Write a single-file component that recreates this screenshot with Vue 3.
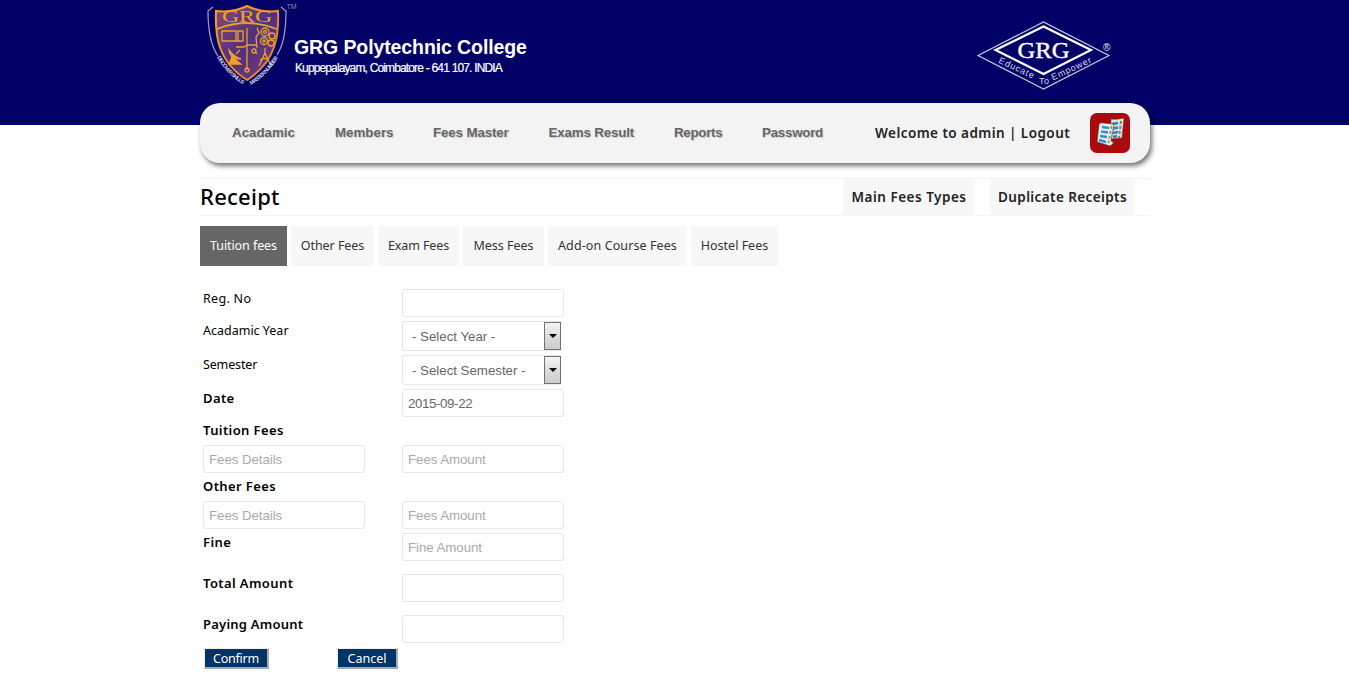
<script setup>
const menu = [
  { label: 'Acadamic', cls: 'm1' },
  { label: 'Members', cls: 'm2' },
  { label: 'Fees Master', cls: 'm3' },
  { label: 'Exams Result', cls: 'm4' },
  { label: 'Reports', cls: 'm5' },
  { label: 'Password', cls: 'm6' },
]
const tabs = [
  { label: 'Tuition fees', cls: 't1 active' },
  { label: 'Other Fees', cls: 't2' },
  { label: 'Exam Fees', cls: 't3' },
  { label: 'Mess Fees', cls: 't4' },
  { label: 'Add-on Course Fees', cls: 't5' },
  { label: 'Hostel Fees', cls: 't6' },
]
</script>

<template>
  <div class="page">
    <header class="banner">
      <div class="brand">
        <svg class="crest" width="94" height="90" viewBox="0 0 94 90">
          <defs>
            <linearGradient id="gold" x1="0" y1="0" x2="1" y2="1">
              <stop offset="0" stop-color="#f6a51b" />
              <stop offset="1" stop-color="#d97f2c" />
            </linearGradient>
            <linearGradient id="plum" x1="0" y1="0" x2="1" y2="1">
              <stop offset="0" stop-color="#8a4a72" />
              <stop offset=".5" stop-color="#503080" />
              <stop offset="1" stop-color="#783d78" />
            </linearGradient>
            <path id="mottoL" d="M17 57Q26 74 44 85" />
            <path id="mottoR" d="M51 85Q68 75 79 56" />
          </defs>
          <path d="M47 6Q33 13 16 11C15 34 17 61 47 80C77 61 79 34 78 11Q61 13 47 6Z" fill="url(#plum)" stroke="url(#gold)" stroke-width="2" />
          <path d="M17 29Q47 17 77 29" fill="none" stroke="#efa126" stroke-width="1.800" />
          <path d="M13 7L8 11C8 32 11 46 18 56M81 7L86 11C86 32 83 46 77 55" fill="none" stroke="#a193bd" stroke-width="1.300" />
          <text x="22" y="22" textLength="50" lengthAdjust="spacingAndGlyphs" font-family="Liberation Serif, serif" font-size="16" fill="#f4a51c">GRG</text>
          <g fill="none" stroke="#eba02b" stroke-width="1.300">
            <path d="M22 31h14v10H22zM38 31h5v10h-5zM24 41h18M47 28v42M36 47h8l3-2h9M57 28l2 5-3 4 1 11M57 54l-2-3M65 48v5M65 53l-6 13M65 53l6 13M60 60q5-3 9 0" />
            <circle cx="65" cy="32" r="4" /><circle cx="72" cy="36" r="3" /><circle cx="64" cy="41" r="3.500" /><circle cx="71" cy="43" r="3" />
            <circle cx="65" cy="32" r="1.500" /><circle cx="64" cy="41" r="1" />
            <circle cx="54" cy="51" r="2" /><circle cx="47" cy="70" r="2" />
            <path d="M29 50q1 10 12 9q-7-2-12-9zM32 57l-3 7h12zM36 54l4-4" fill="#eba02b" />
          </g>
          <g font-family="Liberation Sans, sans-serif" font-size="5.500" font-weight="700" fill="#d6d4e6">
            <text><textPath href="#mottoL" textLength="38">DISCOVER SKILLS</textPath></text>
            <text><textPath href="#mottoR" textLength="39">MASTER NUMBER</textPath></text>
          </g>
          <text x="86.500" y="9" textLength="10" font-family="Liberation Sans, sans-serif" font-size="7" fill="#8a8aaa">TM</text>
        </svg>
        <div class="names">
          <div class="college">GRG Polytechnic College</div>
          <div class="address">Kuppepalayam, Coimbatore - 641 107. INDIA</div>
        </div>
      </div>
      <svg class="diamond" width="140" height="74" viewBox="0 0 140 74">
        <path d="M4 37.500L69.500 4L135 37.500L69.500 71Z" fill="none" stroke="#c9c9e2" stroke-width="1.200" />
        <path d="M21.500 32L69.500 8.500L117 32L69.500 56Z" fill="none" stroke="#fff" stroke-width="2.200" />
        <text x="43.500" y="39.500" textLength="52" lengthAdjust="spacingAndGlyphs" font-family="Liberation Serif, serif" font-size="23" fill="#fff" stroke="#fff" stroke-width=".4">GRG</text>
        <g font-family="Liberation Sans, sans-serif" font-size="9" fill="#dcdcef">
          <text transform="translate(24 44.500) rotate(25)" textLength="38">Educate</text>
          <text x="65" y="65.500" textLength="10">To</text>
          <text transform="translate(79 62.500) rotate(-25)" textLength="43">Empower</text>
        </g>
        <text x="129" y="32.500" font-family="Liberation Sans, sans-serif" font-size="10" fill="#e6e6f5">®</text>
      </svg>
    </header>

    <main class="wrap">
      <nav class="bar">
        <a v-for="m in menu" :key="m.label" class="item" :class="m.cls">{{ m.label }}</a>
        <span class="welcome">Welcome to admin | Logout</span>
        <svg class="app-icon" width="40" height="40" viewBox="0 0 40 40">
          <rect width="40" height="40" rx="7" fill="#aa090e" />
          <path d="M21 6q6 1 13-1l-2 20-11 1z" fill="#dfe3e2" stroke="#74201c" stroke-width=".5" />
          <path d="M22 11l6-1M23 15.500l5-1M23 20l5-1M23 24l4-1" stroke="#2487bd" stroke-width="2.500" />
          <path d="M31 8l-2 17" stroke="#629358" stroke-width="2" stroke-dasharray="3 2" />
          <path d="M9 11q2-2 4-1l11 1-3 17q3 0 2 3l-3 2-13-4z" fill="#e9eceb" stroke="#631a15" stroke-width=".6" />
          <path d="M12 14l7 1M11 18.500l7 1M10 23l7 1M9 27l7 2" stroke="#2a91cc" stroke-width="2.600" />
          <path d="M21.500 13l-3 17" stroke="#70a15b" stroke-width="1.800" stroke-dasharray="3 2" />
        </svg>
      </nav>

      <section class="heading">
        <h1>Receipt</h1>
        <a class="link main-types"><span>Main Fees Types</span></a>
        <a class="link duplicates"><span>Duplicate Receipts</span></a>
      </section>

      <div class="tabs">
        <a v-for="t in tabs" :key="t.label" class="tab" :class="t.cls">{{ t.label }}</a>
      </div>

      <form class="form" @submit.prevent>
        <label class="reg">Reg. No</label><input type="text" />
        <label>Acadamic Year</label>
        <div class="select"><span>- Select Year -</span><i class="arrow"></i></div>
        <label class="sem">Semester</label>
        <div class="select"><span>- Select Semester -</span><i class="arrow"></i></div>
        <label class="strong">Date</label><input class="date" type="text" value="2015-09-22" />
        <label class="strong full">Tuition Fees</label>
        <input type="text" placeholder="Fees Details" /><input type="text" placeholder="Fees Amount" />
        <label class="strong full">Other Fees</label>
        <input type="text" placeholder="Fees Details" /><input type="text" placeholder="Fees Amount" />
        <label class="strong">Fine</label><input type="text" placeholder="Fine Amount" />
        <label class="strong">Total Amount</label><input type="text" />
        <label class="strong paying">Paying Amount</label><input type="text" />
        <div class="actions full">
          <button class="confirm">Confirm</button>
          <button class="cancel">Cancel</button>
        </div>
      </form>
    </main>
  </div>
</template>

<style>
body { margin: 0; background: #fff; overflow: hidden; }
</style>

<style scoped>
.page { width: 1349px; height: 675px; overflow: hidden; font-family: "Noto Sans", "Open Sans", sans-serif; font-size: 13px; color: #000; }
.banner { height: 125px; background: #000066; padding: 0 235px 0 200px; display: flex; justify-content: space-between; align-items: flex-start; box-sizing: border-box; }
.brand { display: flex; }
.crest { display: block; overflow: visible; }
.names { padding-top: 35px; color: #fff; font-family: "Liberation Sans", Arial, sans-serif; white-space: nowrap; }
.college { font-size: 19.5px; line-height: 24px; font-weight: 700; letter-spacing: -.1px; }
.address { font-size: 12px; line-height: 18px; letter-spacing: -.88px; word-spacing: .3px; padding-left: 1px; -webkit-text-stroke: .2px #fff; }
.diamond { display: block; margin-top: 18px; }
.wrap { width: 950px; margin: -22px 0 0 200px; position: relative; }
.bar { height: 60px; background: #f3f3f3; border-radius: 20px; box-shadow: 2px 3px 5px rgba(0, 0, 0, .55); display: flex; align-items: center; padding: 0 20px 0 32px; box-sizing: border-box; white-space: nowrap; }
.item { font: 700 13.33px/20px "Liberation Sans", Arial, sans-serif; color: #666; text-shadow: 1px 1px 1px #ccc; }
.m1 { width: 103px; } .m2 { width: 98px; }
.m3 { width: 115.5px; letter-spacing: -.13px; }
.m4 { width: 125.5px; letter-spacing: -.16px; }
.m5 { width: 88px; letter-spacing: -.28px; }
.m6 { letter-spacing: -.25px; }
.welcome { margin-left: auto; width: 215px; font-weight: 600; font-size: 13.5px; letter-spacing: .45px; color: #222; }
.app-icon { display: block; }
.heading { height: 38px; margin-top: 15px; display: flex; border-top: 1px solid #f3f3f3; border-bottom: 1px solid #f3f3f3; box-sizing: border-box; padding-right: 15px; white-space: nowrap; }
h1 { margin: 0; font-size: 22px; line-height: 34px; font-weight: 500; letter-spacing: .25px; flex: 1; }
.link { background: #f7f7f7; color: #222; font-size: 13.5px; font-weight: 600; line-height: 37px; height: 37px; text-align: center; letter-spacing: .4px; }
.main-types { width: 132px; margin-right: 15px; letter-spacing: .5px; }
.duplicates { width: 145px; }
.tabs { display: flex; gap: 4px; margin-top: 10px; white-space: nowrap; }
.tab { height: 40px; line-height: 39px; background: #f7f7f7; color: #333; text-align: center; font-size: 12.5px; }
.t1 { width: 87px; letter-spacing: -.08px; } .t2 { width: 83px; letter-spacing: -.05px; } .t3 { width: 81px; letter-spacing: -.1px; } .t4 { width: 81px; } .t5 { width: 139px; letter-spacing: .1px; } .t6 { width: 87px; }
.active { background: #666; color: #fff; }
.form { margin: 23px 0 0 3px; display: grid; grid-template-columns: 199px 162px; grid-template-rows: 32px 34px 34px 32px 24px 32px 24px 32px 41px 41px 32px 24px; }
.full { grid-column: 1 / 3; }
label { font-size: 12.5px; line-height: 19px; white-space: nowrap; }
.reg { letter-spacing: .3px; }
.sem { letter-spacing: -.15px; }
.strong { font-weight: 600; font-size: 13px; letter-spacing: .4px; }
.paying { letter-spacing: .22px; }
input, .select { font: 13.33px/18px "Liberation Sans", Arial, sans-serif; color: #666; border: 1px solid #e6e6e6; border-radius: 3px; box-sizing: border-box; width: 162px; height: 28px; padding: 0 5px; background: #fff; outline: 0; margin: 0; }
input::placeholder { color: #aaa; opacity: 1; letter-spacing: -.08px; }
.date { letter-spacing: -.4px; }
.select { width: 160px; height: 30px; display: flex; align-items: center; justify-content: space-between; padding: 0 0 0 9px; white-space: nowrap; border-right: 0; }
.select span { padding-top: 2px; letter-spacing: -.03px; }
.arrow { width: 17px; height: 28px; box-sizing: border-box; border: 1px solid #707070; background: linear-gradient(#f5f5f5, #ddd 50%, #ccc); display: flex; align-items: center; justify-content: center; margin-right: 1px; }
.arrow::after { content: ""; border: 4px solid transparent; border-top-color: #000; border-bottom: 0; }
.actions { display: flex; align-items: flex-start; padding: 1px 0 0 1px; }
button { height: 21px; box-sizing: border-box; border: 1px solid #eee; border-right: 2px solid #aaa; border-bottom: 2px solid #aaa; background: #003366; color: #fff; font: 12.5px/16px "Noto Sans", sans-serif; padding: 1px 0 0; margin: 0; white-space: nowrap; }
.confirm { width: 65px; letter-spacing: -.25px; }
.cancel { width: 61px; margin-left: 68px; }
</style>
